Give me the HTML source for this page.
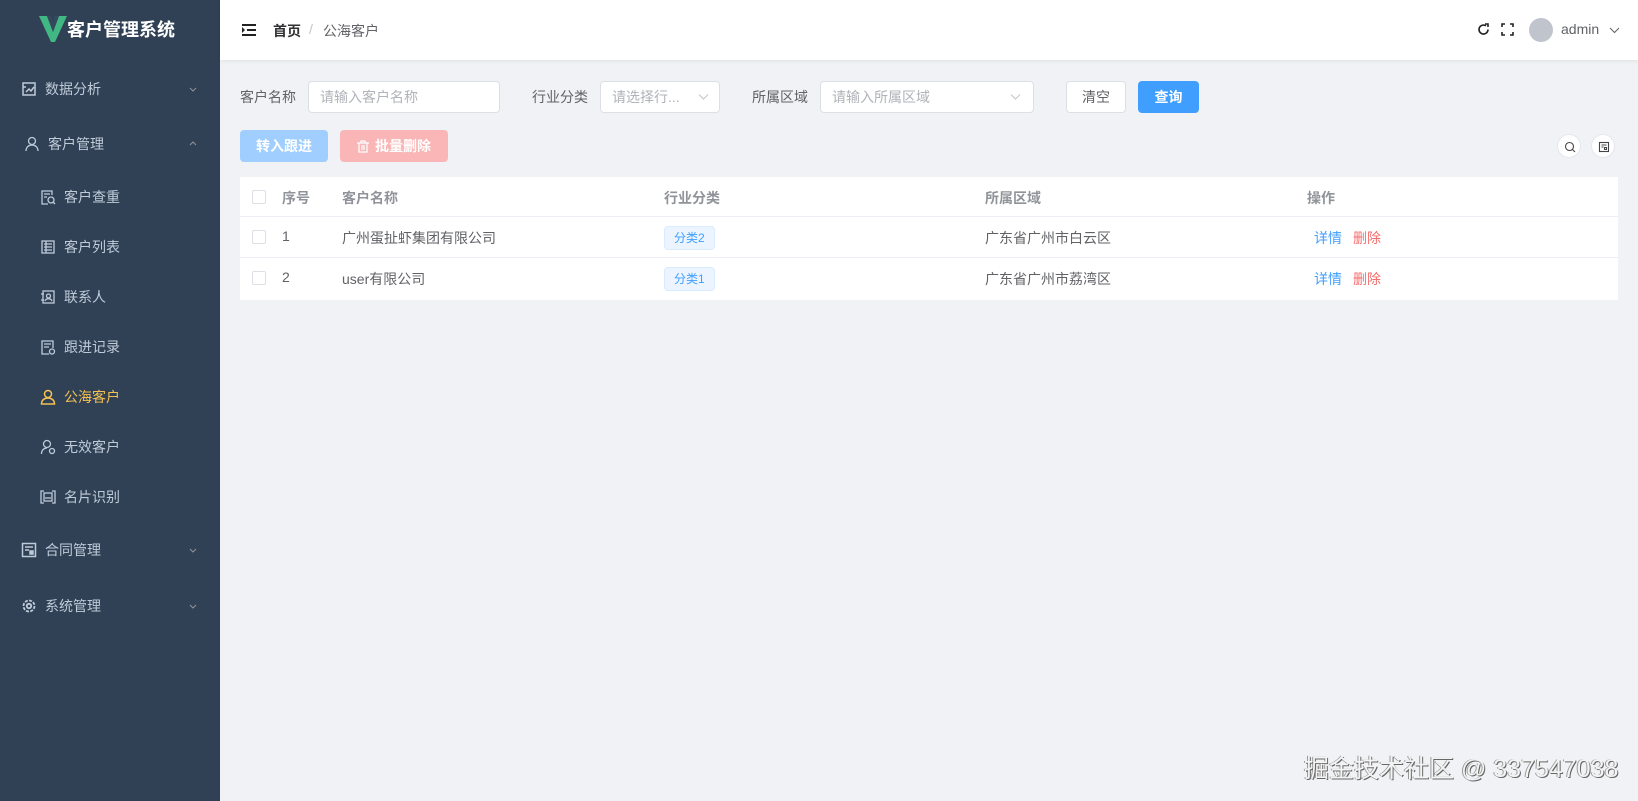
<!DOCTYPE html>
<html><head><meta charset="utf-8"><style>
*{margin:0;padding:0;box-sizing:border-box}
body{width:1638px;height:801px;overflow:hidden;background:#f0f2f5;font-family:"Liberation Sans","Noto Sans CJK SC",sans-serif;font-size:14px;color:#606266;position:relative}
.side{position:absolute;left:0;top:0;width:220px;height:801px;background:#304156}
.logo{position:absolute;left:38px;top:14px;color:#fff;font-weight:bold;font-size:18px;display:flex;align-items:center}
.mi{position:absolute;left:0;width:220px;color:#bfcbd9;font-size:14px;display:flex;align-items:center}
.mi svg{margin-right:8px}
.mi .chev{position:absolute;left:188px}
.hdr{position:absolute;left:220px;top:0;right:0;height:60px;background:#fff;box-shadow:0 1px 4px rgba(0,21,41,.08)}
.abs{position:absolute}
.inp{position:absolute;top:81px;height:32px;border:1px solid #dcdfe6;border-radius:4px;background:#fff;color:#b0b3b9;font-size:14px;line-height:30px;padding-left:11px}
.lbl{position:absolute;top:87px;color:#606266;font-size:14px}
.btn{position:absolute;border-radius:4px;font-size:14px;text-align:center;line-height:32px;height:32px}
.tbl{position:absolute;left:240px;top:177px;width:1378px;height:123px;background:#fff}
.row{position:absolute;left:0;width:1378px;height:41px;border-bottom:1px solid #ebeef5}
.cb{position:absolute;left:12px;top:13px;width:14px;height:14px;border:1px solid #dcdfe6;border-radius:2px;background:#fff}
.c{position:absolute;top:11px;font-size:14px}
.tag{position:absolute;left:424px;top:9px;height:24px;line-height:22px;padding:0 9px;font-size:12px;color:#409eff;background:#ecf5ff;border:1px solid #d9ecff;border-radius:4px}
</style></head><body>
<div class="side">
 <div class="logo"><svg width="30" height="30" viewBox="0 0 30 30"><path d="M1 2h8l6 16 6-16h8L17 28h-4z" fill="#41b883"/><path d="M9 2h4l2 7 2-7h4l-6 16z" fill="#35495e"/></svg><span style="margin-left:-1px">客户管理系统</span></div>
 <div class="mi" style="top:78px;height:22px;left:21px"><svg width="16" height="16" viewBox="0 0 16 16" fill="none" stroke="#bfcbd9" stroke-width="1.5"><rect x="2" y="2" width="12" height="12"/><path d="M5 11l3-3 2 2 3-4M2 6h3"/></svg><span style="color:#bfcbd9">数据分析</span><svg class="chev" style="left:167px" width="10" height="10" viewBox="0 0 10 10" fill="none" stroke="#909399"><path d="M2 4l3 3 3-3"/></svg></div>
 <div class="mi" style="top:133px;height:22px;left:24px"><svg width="16" height="16" viewBox="0 0 16 16" fill="none" stroke="#bfcbd9" stroke-width="1.3"><circle cx="8" cy="5" r="3.5"/><path d="M2 15c0-4 3-6 6-6s6 2 6 6"/></svg><span>客户管理</span><svg class="chev" style="left:164px" width="10" height="10" viewBox="0 0 10 10" fill="none" stroke="#909399"><path d="M2 6l3-3 3 3"/></svg></div>
 <div class="mi" style="top:186px;height:22px;left:40px"><svg width="16" height="16" viewBox="0 0 16 16" fill="none" stroke="#bfcbd9" stroke-width="1.3"><path d="M12 6V2H2v13h6M4 5h6M4 8h3"/><circle cx="11" cy="11" r="3"/><path d="M13 13l2 2"/></svg><span>客户查重</span></div>
 <div class="mi" style="top:236px;height:22px;left:40px"><svg width="16" height="16" viewBox="0 0 16 16" fill="none" stroke="#bfcbd9" stroke-width="1.3"><rect x="2" y="2" width="12" height="12"/><path d="M4 5h8M4 8h8M4 11h8M6 2v12"/></svg><span>客户列表</span></div>
 <div class="mi" style="top:286px;height:22px;left:40px"><svg width="16" height="16" viewBox="0 0 16 16" fill="none" stroke="#bfcbd9" stroke-width="1.3"><rect x="3" y="2" width="11" height="12"/><path d="M1 5h3M1 11h3"/><circle cx="8.5" cy="7" r="2"/><path d="M5 12c1-3 6-3 7 0"/></svg><span>联系人</span></div>
 <div class="mi" style="top:336px;height:22px;left:40px"><svg width="16" height="16" viewBox="0 0 16 16" fill="none" stroke="#bfcbd9" stroke-width="1.3"><path d="M9 15H2V2h11v7M4 5h7M4 8h5"/><circle cx="12" cy="12.5" r="2.5"/></svg><span>跟进记录</span></div>
 <div class="mi" style="top:386px;height:22px;left:40px;color:#f4c152"><svg width="16" height="16" viewBox="0 0 16 16" fill="none" stroke="#f4c152" stroke-width="1.5"><circle cx="8" cy="5" r="3.5"/><path d="M1.5 15c0-4 3-6 6.5-6s6.5 2 6.5 6z"/></svg><span style="color:#f4c152">公海客户</span></div>
 <div class="mi" style="top:436px;height:22px;left:40px"><svg width="16" height="16" viewBox="0 0 16 16" fill="none" stroke="#bfcbd9" stroke-width="1.3"><circle cx="7" cy="5" r="3.5"/><path d="M1.5 15c0-4 2.5-6 5.5-6"/><circle cx="12" cy="12" r="2.5"/></svg><span>无效客户</span></div>
 <div class="mi" style="top:486px;height:22px;left:40px"><svg width="16" height="16" viewBox="0 0 16 16" fill="none" stroke="#bfcbd9" stroke-width="1.3"><path d="M4 2H1v12h3M12 2h3v12h-3"/><rect x="4" y="4" width="8" height="8"/><path d="M5 9h6"/></svg><span>名片识别</span></div>
 <div class="mi" style="top:539px;height:22px;left:21px"><svg width="16" height="16" viewBox="0 0 16 16" fill="none" stroke="#bfcbd9" stroke-width="1.5"><rect x="1.5" y="1.5" width="13" height="13"/><path d="M4 5h8M4 8h4"/><rect x="9" y="9" width="3" height="3" fill="#bfcbd9"/></svg><span>合同管理</span><svg class="chev" style="left:167px" width="10" height="10" viewBox="0 0 10 10" fill="none" stroke="#909399"><path d="M2 4l3 3 3-3"/></svg></div>
 <div class="mi" style="top:595px;height:22px;left:21px"><svg width="16" height="16" viewBox="0 0 16 16" fill="none" stroke="#bfcbd9" stroke-width="1.8"><circle cx="8" cy="8" r="5.5" stroke-dasharray="3 1.3"/><circle cx="8" cy="8" r="2.2"/></svg><span>系统管理</span><svg class="chev" style="left:167px" width="10" height="10" viewBox="0 0 10 10" fill="none" stroke="#909399"><path d="M2 4l3 3 3-3"/></svg></div>
</div>
<div class="hdr">
 <svg class="abs" style="left:22px;top:23px" width="14" height="14" viewBox="0 0 14 14" fill="#222"><rect x="0" y="1" width="14" height="2"/><rect x="5" y="6" width="9" height="2"/><rect x="0" y="11" width="14" height="2"/><path d="M0 4l3 3-3 3z"/></svg>
 <span class="abs" style="left:53px;top:21px;font-weight:bold;color:#303133">首页</span>
 <span class="abs" style="left:89px;top:21px;color:#c0c4cc">/</span>
 <span class="abs" style="left:103px;top:21px;color:#606266">公海客户</span>
 <svg class="abs" style="left:1257px;top:23px" width="13" height="13" viewBox="0 0 13 13" fill="none" stroke="#222" stroke-width="1.6"><path d="M11 6.5A4.5 4.5 0 1 1 9 2.8"/><path d="M8 1h3v3" /></svg>
 <svg class="abs" style="left:1281px;top:23px" width="13" height="13" viewBox="0 0 13 13" fill="none" stroke="#222" stroke-width="1.6"><path d="M1 4V1h3M9 1h3v3M12 9v3H9M4 12H1V9"/></svg>
 <div class="abs" style="left:1309px;top:18px;width:24px;height:24px;border-radius:50%;background:#c0c4cc"></div>
 <span class="abs" style="left:1341px;top:21px;color:#606266">admin</span>
 <svg class="abs" style="left:1389px;top:25px" width="11" height="10" viewBox="0 0 11 10" fill="none" stroke="#606266"><path d="M1 3l4.5 4.5L10 3"/></svg>
</div>
<span class="lbl" style="left:240px">客户名称</span>
<div class="inp" style="left:308px;width:192px">请输入客户名称</div>
<span class="lbl" style="left:532px">行业分类</span>
<div class="inp" style="left:600px;width:120px">请选择行...<svg class="abs" style="right:10px;top:11px" width="11" height="8" viewBox="0 0 11 8" fill="none" stroke="#c0c4cc"><path d="M1 1.5l4.5 4.5L10 1.5"/></svg></div>
<span class="lbl" style="left:752px">所属区域</span>
<div class="inp" style="left:820px;width:214px">请输入所属区域<svg class="abs" style="right:12px;top:11px" width="11" height="8" viewBox="0 0 11 8" fill="none" stroke="#c0c4cc"><path d="M1 1.5l4.5 4.5L10 1.5"/></svg></div>
<div class="btn" style="left:1066px;top:81px;width:60px;background:#fff;border:1px solid #dcdfe6;color:#606266;line-height:30px">清空</div>
<div class="btn" style="left:1138px;top:81px;width:61px;background:#409eff;color:#fff;font-weight:bold">查询</div>
<div class="btn" style="left:240px;top:130px;width:88px;background:#a0cfff;color:#fff;font-weight:bold">转入跟进</div>
<div class="btn" style="left:340px;top:130px;width:108px;background:#fab6b6;color:#fff;font-weight:bold"><svg style="vertical-align:-2px;margin-right:6px" width="12" height="13" viewBox="0 0 12 13" fill="none" stroke="#fff" stroke-width="1.2"><path d="M0 3h12M4 3V1h4v2M2 3v9h8V3M5 5v5M7 5v5"/></svg>批量删除</div>
<div class="abs" style="left:1557px;top:134px;width:24px;height:24px;border-radius:50%;background:#fff;border:1px solid #e4e7ed"><svg class="abs" style="left:6px;top:6px" width="12" height="12" viewBox="0 0 12 12" fill="none" stroke="#444" stroke-width="1.1"><circle cx="5.5" cy="5.5" r="4"/><path d="M8.5 8.5l2.5 2.5"/></svg></div>
<div class="abs" style="left:1591px;top:134px;width:24px;height:24px;border-radius:50%;background:#fff;border:1px solid #e4e7ed"><svg class="abs" style="left:6px;top:6px" width="12" height="12" viewBox="0 0 12 12" fill="none" stroke="#444" stroke-width="1.1"><rect x="1.5" y="1.5" width="9" height="9"/><path d="M3.5 4h5M3.5 6h2M6.5 6.5h2v2h-2z"/></svg></div>
<div class="tbl">
 <div class="row" style="top:0;height:40px;font-weight:bold;color:#909399"><div class="cb"></div><span class="c" style="left:42px">序号</span><span class="c" style="left:102px">客户名称</span><span class="c" style="left:424px">行业分类</span><span class="c" style="left:745px">所属区域</span><span class="c" style="left:1067px">操作</span></div>
 <div class="row" style="top:40px"><div class="cb"></div><span class="c" style="left:42px">1</span><span class="c" style="left:102px">广州蛋扯虾集团有限公司</span><span class="tag">分类2</span><span class="c" style="left:745px">广东省广州市白云区</span><span class="c" style="left:1074px;color:#409eff">详情</span><span class="c" style="left:1113px;color:#f56c6c">删除</span></div>
 <div class="row" style="top:81px;border-bottom:none"><div class="cb"></div><span class="c" style="left:42px">2</span><span class="c" style="left:102px">user有限公司</span><span class="tag">分类1</span><span class="c" style="left:745px">广东省广州市荔湾区</span><span class="c" style="left:1074px;color:#409eff">详情</span><span class="c" style="left:1113px;color:#f56c6c">删除</span></div>
</div>
<div class="abs" style="left:1304px;top:749px;font-size:25px;color:#f4f4f4;text-shadow:1px 1px 0 #666,-1px 0 0 #999;white-space:nowrap">掘金技术社区 @ 337547038</div>
</body></html>
